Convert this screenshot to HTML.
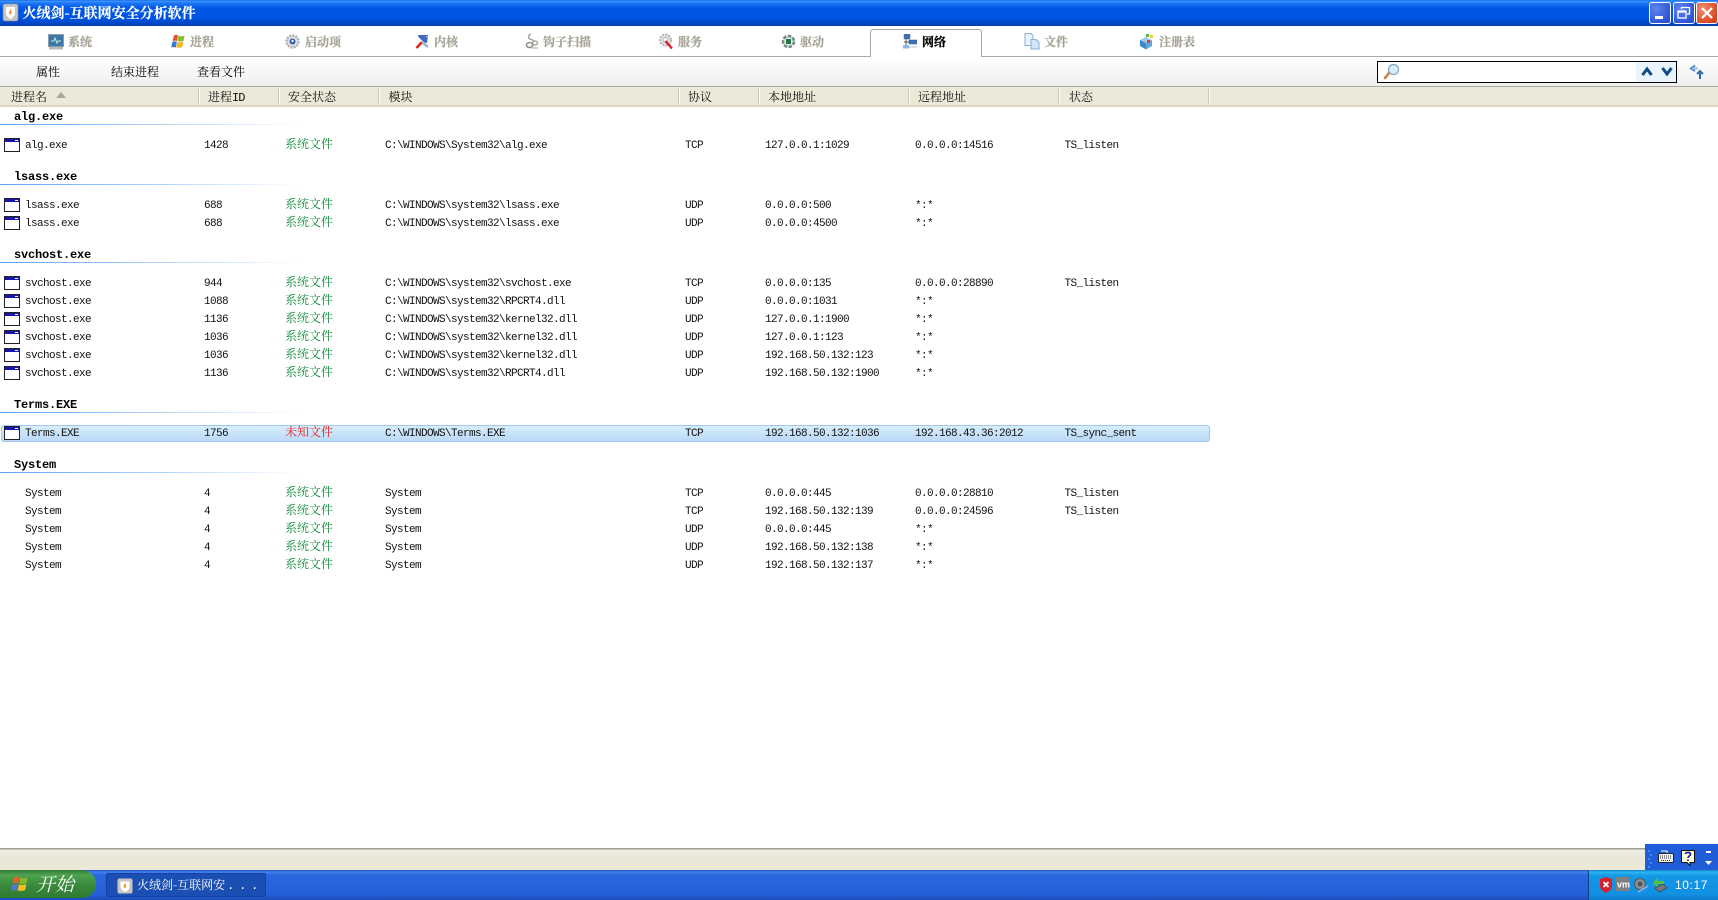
<!DOCTYPE html>
<html><head><meta charset="utf-8"><title>火绒剑-互联网安全分析软件</title>
<style>
html,body{margin:0;padding:0;background:#fff;width:1718px;height:900px;overflow:hidden}
body{position:relative;font-family:"Liberation Mono","Noto Serif CJK SC",monospace;color:#000}
div,span,svg{position:absolute;white-space:nowrap}
s{text-decoration:none}
.title{left:0;top:0;width:1718px;height:26px;background:linear-gradient(#0b5fe0 0,#3f97ff 1px,#1f78f5 3px,#0057e5 8px,#0054e3 18px,#0048c8 23px,#003ca8 26px)}
.tt{left:22.500px;top:3px;line-height:20px;color:#fff;font:bold 14px "Noto Serif CJK SC",serif;-webkit-text-stroke:.2px #fff}
.wb{top:2px;width:20px;height:20px;border:1px solid #fff;border-radius:3px;background:radial-gradient(circle at 30% 30%,#5f84ea,#2a50d6 80%)}
.tab{top:27px;font:bold 12px/30px "Noto Serif CJK SC",serif;color:#a8a598;-webkit-text-stroke:.3px #a8a598}
.tb{top:63px;line-height:18px;font-size:12px;font-family:"Noto Serif CJK SC",serif}
.hd{left:0;top:86px;width:1718px;height:21px;background:#ece9d8;border-top:1px solid #a8a8a8;box-sizing:border-box}
.hd:after{content:"";position:absolute;left:0;right:0;bottom:0;height:2px;background:#d9d6c3}
.h{top:88px;line-height:18px;font-size:12px;font-family:"Noto Serif CJK SC",serif;color:#111}
.sp{top:89px;width:1px;height:14px;background:#c4c1ac;border-right:1px solid #fff}
.g{left:14px;font:bold 12px/18px "Liberation Mono",monospace;letter-spacing:-.2px;color:#000}
.l{left:0;width:300px;height:1px;background:linear-gradient(90deg,#59a2ff,#a9d0fb 50%,#fff)}
.r{left:0;width:1210px;height:18px}
.r div{top:1px;line-height:18px;font-size:11px;letter-spacing:-.6px;color:#111}
.n{left:25px}.p{left:204px}.m{left:385px}.t{left:685px}.a{left:765px}.b{left:915px}.c{left:1064.500px}
.r div.s{top:-1px;left:285px;font-family:"Noto Serif CJK SC",serif;font-size:12px;letter-spacing:0;color:#0a8a36}
.i{left:4px;top:2px;width:16px;height:14px}
</style></head><body>

<div class="title"></div>
<svg style="left:2px;top:3px" width="17" height="19" viewBox="0 0 17 19"><rect x="1" y="1" width="15" height="17" rx="2" fill="#c9c6c2" stroke="#8a8a8a" stroke-width=".6"/><path d="M4 4h9v6c0 3-3 5-4.500 6C7 15 4 13 4 10z" fill="#fff"/><path d="M8.500 6c1 2 1.500 2.500 1 4.500-.5 1-2 1-2.500 0-.2-1 .5-2 1.500-4.500z" fill="#ee9a22"/></svg>
<div class="tt">火绒剑-互联网安全分析软件</div>
<div class="wb" style="left:1649px"><span style="left:5px;top:13px;width:8px;height:3px;background:#fff"></span></div>
<div class="wb" style="left:1673px"><svg style="left:3px;top:3px" width="14" height="14" viewBox="0 0 14 14" fill="none" stroke="#fff" stroke-width="1.300"><rect x="1" y="5" width="8" height="7"/><path d="M1 6h8"/><path d="M4.500 3V1.500H12.500V8H10"/></svg></div>
<div class="wb" style="left:1696px;background:radial-gradient(circle at 30% 30%,#f08f70,#d8431c 80%)"><svg style="left:3px;top:3px" width="14" height="14" viewBox="0 0 14 14"><path d="M2 2L12 12M12 2L2 12" stroke="#fff" stroke-width="2.200"/></svg></div>

<!-- tabs -->
<div style="left:0;top:56px;width:1718px;height:1px;background:#a8a8a8"></div>
<div style="left:869.500px;top:29px;width:110px;height:28px;background:#fff;border:1px solid #a8a8a8;border-bottom:0;border-radius:3px 3px 0 0"></div>

<svg style="left:48px;top:34px" width="16" height="16" viewBox="0 0 16 16"><rect x=".5" y=".5" width="15" height="12" fill="#3d76a8" stroke="#8d9aa8"/><path d="M3 7h3l1-3 2 5 1-2h3" stroke="#bff0e0" fill="none"/><rect x="1" y="13" width="14" height="2.500" fill="#b8b8b8"/></svg>
<div class="tab" style="left:68px">系统</div>
<svg style="left:171px;top:34px" width="14" height="15" viewBox="0 0 14 15"><path d="M3 1.500C5 .5 6 1 7 1.500l-1 5.500C4.500 6.500 3 6.500 1.500 7z" fill="#e8502a"/><path d="M7.500 1.500c2 1 4 1 6 .2L12.500 7c-2 .8-4 .6-6 0z" fill="#86c02e"/><path d="M1.300 7.800c1.500-.5 3-.5 4.500 0L4.800 13.500C3.500 13 2 13 .3 13.500z" fill="#3c79d8"/><path d="M6.300 7.800c2 .6 4 .6 6 0l-1 5.500c-2 .8-4 .6-6 0z" fill="#f3bb1c"/></svg>
<div class="tab" style="left:190px">进程</div>
<svg style="left:285px;top:34px" width="15" height="15" viewBox="0 0 15 15"><circle cx="7.500" cy="7.500" r="6" fill="#dcdcdc" stroke="#b0b0b0" stroke-width="2.400" stroke-dasharray="2 1.100"/><circle cx="7.500" cy="7.500" r="4.800" fill="#e2e4ea"/><circle cx="7.500" cy="7.500" r="3" fill="#2f5aa8"/><circle cx="7.500" cy="7" r="1.200" fill="#fff"/></svg>
<div class="tab" style="left:305px">启动项</div>
<svg style="left:415px;top:34px" width="15" height="15" viewBox="0 0 15 15"><path d="M3 1h10l-1 8-3-.5L3.500 3z" fill="#3f68c0"/><path d="M10 2h3v3z" fill="#8fb0e8"/><path d="M7 8L1.500 14" stroke="#d8281e" stroke-width="2.500"/><path d="M8 9l5 4" stroke="#9ab0dc" stroke-width="2.500"/></svg>
<div class="tab" style="left:434px">内核</div>
<svg style="left:525px;top:33px" width="15" height="17" viewBox="0 0 15 17" fill="none" stroke="#aaa9a0" stroke-width="1.600"><path d="M6 1c-2 1-3 2-2 4s3 1 5 3"/><ellipse cx="10" cy="10" rx="2.500" ry="2"/><ellipse cx="4.500" cy="12" rx="3" ry="2.500" stroke="#8e8e86"/><path d="M7 15h6" stroke="#c8c8c0"/></svg>
<div class="tab" style="left:543px">钩子扫描</div>
<svg style="left:658px;top:33px" width="16" height="17" viewBox="0 0 16 17"><circle cx="7.500" cy="7" r="5.500" fill="#e6e6e6" stroke="#b4b4b4" stroke-width="2.200" stroke-dasharray="2 1.200"/><circle cx="7.500" cy="7" r="2.500" fill="#fff" stroke="#b0b0b0"/><path d="M7.500 8l6.500 7.500" stroke="#d2222c" stroke-width="2.400"/></svg>
<div class="tab" style="left:678px">服务</div>
<svg style="left:781px;top:34px" width="15" height="15" viewBox="0 0 15 15"><circle cx="7.500" cy="7.500" r="5.500" fill="#d9e2d9" stroke="#6f8a80" stroke-width="2.600" stroke-dasharray="3.500 1.500"/><circle cx="7.500" cy="7.500" r="4" fill="#e8f0e8"/><rect x="5" y="5" width="5" height="5" fill="#1e7a45"/></svg>
<div class="tab" style="left:800px">驱动</div>
<svg style="left:903px;top:34px" width="14" height="15" viewBox="0 0 14 15"><rect x="1" y="0" width="6" height="5" fill="#3b6cb0" stroke="#5d7a9e" stroke-width=".5"/><rect x="6" y="6" width="8" height="4" fill="#3f72bc" stroke="#2a4d80" stroke-width=".5"/><rect x="0" y="11" width="6" height="3.500" fill="#8fb4e0"/><path d="M3 5v6M1 8h5" stroke="#555"/><path d="M6 13h8" stroke="#a9c4e6"/></svg>
<div class="tab" style="left:922px;color:#000;-webkit-text-stroke:.3px #000">网络</div>
<svg style="left:1024px;top:33px" width="16" height="17" viewBox="0 0 16 17"><path d="M1 .5h6l2 2v10H1z" fill="#eaf3fc" stroke="#88aed8"/><path d="M7 6.500h5l3 3V16H7z" fill="#d3e6f8" stroke="#88aed8"/></svg>
<div class="tab" style="left:1044px">文件</div>
<svg style="left:1139px;top:33px" width="16" height="17" viewBox="0 0 16 17"><path d="M1 7l6-3 6 3-6 3z" fill="#9ccaee"/><path d="M1 7v6l6 3.500V10z" fill="#3f87c8"/><path d="M13 7v6l-6 3.500V10z" fill="#5ea5d8"/><rect x="8" y="7" width="3" height="3" fill="#e23c3c"/><rect x="11" y="2" width="3" height="3" fill="#e8d02a"/><rect x="7" y="1" width="3" height="3" fill="#4db84d"/></svg>
<div class="tab" style="left:1159px">注册表</div>

<!-- toolbar -->
<div style="left:0;top:57px;width:1718px;height:29px;background:linear-gradient(#fff,#efefef)"></div>
<div class="tb" style="left:36px">属性</div>
<div class="tb" style="left:111px">结束进程</div>
<div class="tb" style="left:197px">查看文件</div>
<div style="left:1377px;top:61px;width:298px;height:20px;border:1px solid #000;background:#fff"></div>
<div style="left:1636px;top:62px;width:40px;height:20px;background:#eaf4fc"></div>
<svg style="left:1383px;top:63px" width="17" height="17" viewBox="0 0 17 17"><path d="M6 10l-4 5" stroke="#c48438" stroke-width="2.600" stroke-linecap="round"/><circle cx="10.500" cy="6.500" r="5" fill="#d6eefb" stroke="#8aa4c0" stroke-width="1.200"/></svg>
<svg style="left:1641px;top:66px" width="12" height="11" viewBox="0 0 12 11"><path d="M1.500 9L6 3l4.500 6" fill="none" stroke="#0f4c86" stroke-width="3"/></svg>
<svg style="left:1661px;top:66px" width="12" height="11" viewBox="0 0 12 11"><path d="M1.500 2L6 8l4.500-6" fill="none" stroke="#0f4c86" stroke-width="3"/></svg>
<svg style="left:1689px;top:64px" width="16" height="16" viewBox="0 0 16 16" fill="none" stroke-width="2"><path d="M6 1.500L2 4.500l4 2.500" stroke="#4a86c8"/><path d="M3 4.500h6" stroke="#9cc0e6"/><path d="M11 15V7" stroke="#2e6cae"/><path d="M8 10l3-3 3 3" stroke="#2e6cae"/></svg>

<!-- header -->
<div class="hd"></div>
<div class="h" style="left:11px">进程名</div>
<svg style="left:56px;top:92px" width="10" height="6" viewBox="0 0 10 6"><path d="M5 0L10 6H0z" fill="#aca899"/></svg>
<div class="sp" style="left:198px"></div><div class="h" style="left:208px">进程<s style="font:12px 'Liberation Mono',monospace;letter-spacing:-1px">ID</s></div>
<div class="sp" style="left:278px"></div><div class="h" style="left:288px">安全状态</div>
<div class="sp" style="left:378px"></div><div class="h" style="left:388.500px">模块</div>
<div class="sp" style="left:678px"></div><div class="h" style="left:688px">协议</div>
<div class="sp" style="left:758px"></div><div class="h" style="left:768px">本地地址</div>
<div class="sp" style="left:908px"></div><div class="h" style="left:918px">远程地址</div>
<div class="sp" style="left:1058px"></div><div class="h" style="left:1069px">状态</div>
<div class="sp" style="left:1208px"></div>

<!-- alg -->
<div class="g" style="top:108px">alg.exe</div><div class="l" style="top:124px"></div>
<div class="r" style="top:136px"><svg class="i" viewBox="0 0 16 14"><rect x=".5" y=".5" width="15" height="13" fill="#fff" stroke="#222"/><rect x="1" y="1" width="14" height="3" fill="#1616b0"/><rect x="11" y="2" width="3" height="1" fill="#fff"/></svg><div class="n">alg.exe</div><div class="p">1428</div><div class="s">系统文件</div><div class="m">C:\WINDOWS\System32\alg.exe</div><div class="t">TCP</div><div class="a">127.0.0.1:1029</div><div class="b">0.0.0.0:14516</div><div class="c">TS_listen</div></div>

<!-- lsass -->
<div class="g" style="top:168px">lsass.exe</div><div class="l" style="top:184px"></div>
<div class="r" style="top:196px"><svg class="i" viewBox="0 0 16 14"><rect x=".5" y=".5" width="15" height="13" fill="#fff" stroke="#222"/><rect x="1" y="1" width="14" height="3" fill="#1616b0"/><rect x="11" y="2" width="3" height="1" fill="#fff"/></svg><div class="n">lsass.exe</div><div class="p">688</div><div class="s">系统文件</div><div class="m">C:\WINDOWS\system32\lsass.exe</div><div class="t">UDP</div><div class="a">0.0.0.0:500</div><div class="b">*:*</div></div>
<div class="r" style="top:214px"><svg class="i" viewBox="0 0 16 14"><rect x=".5" y=".5" width="15" height="13" fill="#fff" stroke="#222"/><rect x="1" y="1" width="14" height="3" fill="#1616b0"/><rect x="11" y="2" width="3" height="1" fill="#fff"/></svg><div class="n">lsass.exe</div><div class="p">688</div><div class="s">系统文件</div><div class="m">C:\WINDOWS\system32\lsass.exe</div><div class="t">UDP</div><div class="a">0.0.0.0:4500</div><div class="b">*:*</div></div>

<!-- svchost -->
<div class="g" style="top:246px">svchost.exe</div><div class="l" style="top:262px"></div>
<div class="r" style="top:274px"><svg class="i" viewBox="0 0 16 14"><rect x=".5" y=".5" width="15" height="13" fill="#fff" stroke="#222"/><rect x="1" y="1" width="14" height="3" fill="#1616b0"/><rect x="11" y="2" width="3" height="1" fill="#fff"/></svg><div class="n">svchost.exe</div><div class="p">944</div><div class="s">系统文件</div><div class="m">C:\WINDOWS\system32\svchost.exe</div><div class="t">TCP</div><div class="a">0.0.0.0:135</div><div class="b">0.0.0.0:28890</div><div class="c">TS_listen</div></div>
<div class="r" style="top:292px"><svg class="i" viewBox="0 0 16 14"><rect x=".5" y=".5" width="15" height="13" fill="#fff" stroke="#222"/><rect x="1" y="1" width="14" height="3" fill="#1616b0"/><rect x="11" y="2" width="3" height="1" fill="#fff"/></svg><div class="n">svchost.exe</div><div class="p">1088</div><div class="s">系统文件</div><div class="m">C:\WINDOWS\system32\RPCRT4.dll</div><div class="t">UDP</div><div class="a">0.0.0.0:1031</div><div class="b">*:*</div></div>
<div class="r" style="top:310px"><svg class="i" viewBox="0 0 16 14"><rect x=".5" y=".5" width="15" height="13" fill="#fff" stroke="#222"/><rect x="1" y="1" width="14" height="3" fill="#1616b0"/><rect x="11" y="2" width="3" height="1" fill="#fff"/></svg><div class="n">svchost.exe</div><div class="p">1136</div><div class="s">系统文件</div><div class="m">C:\WINDOWS\system32\kernel32.dll</div><div class="t">UDP</div><div class="a">127.0.0.1:1900</div><div class="b">*:*</div></div>
<div class="r" style="top:328px"><svg class="i" viewBox="0 0 16 14"><rect x=".5" y=".5" width="15" height="13" fill="#fff" stroke="#222"/><rect x="1" y="1" width="14" height="3" fill="#1616b0"/><rect x="11" y="2" width="3" height="1" fill="#fff"/></svg><div class="n">svchost.exe</div><div class="p">1036</div><div class="s">系统文件</div><div class="m">C:\WINDOWS\system32\kernel32.dll</div><div class="t">UDP</div><div class="a">127.0.0.1:123</div><div class="b">*:*</div></div>
<div class="r" style="top:346px"><svg class="i" viewBox="0 0 16 14"><rect x=".5" y=".5" width="15" height="13" fill="#fff" stroke="#222"/><rect x="1" y="1" width="14" height="3" fill="#1616b0"/><rect x="11" y="2" width="3" height="1" fill="#fff"/></svg><div class="n">svchost.exe</div><div class="p">1036</div><div class="s">系统文件</div><div class="m">C:\WINDOWS\system32\kernel32.dll</div><div class="t">UDP</div><div class="a">192.168.50.132:123</div><div class="b">*:*</div></div>
<div class="r" style="top:364px"><svg class="i" viewBox="0 0 16 14"><rect x=".5" y=".5" width="15" height="13" fill="#fff" stroke="#222"/><rect x="1" y="1" width="14" height="3" fill="#1616b0"/><rect x="11" y="2" width="3" height="1" fill="#fff"/></svg><div class="n">svchost.exe</div><div class="p">1136</div><div class="s">系统文件</div><div class="m">C:\WINDOWS\system32\RPCRT4.dll</div><div class="t">UDP</div><div class="a">192.168.50.132:1900</div><div class="b">*:*</div></div>

<!-- Terms -->
<div class="g" style="top:396px">Terms.EXE</div><div class="l" style="top:412px"></div>
<div style="left:1px;top:425px;width:1207px;height:15px;background:linear-gradient(#d7effd,#bad8f7);border:1px solid #a3c6ec;border-radius:3px"></div>
<div class="r" style="top:424px"><svg class="i" viewBox="0 0 16 14"><rect x=".5" y=".5" width="15" height="13" fill="#fff" stroke="#222"/><rect x="1" y="1" width="14" height="3" fill="#1616b0"/><rect x="11" y="2" width="3" height="1" fill="#fff"/></svg><div class="n">Terms.EXE</div><div class="p">1756</div><div class="s" style="color:#f01818">未知文件</div><div class="m">C:\WINDOWS\Terms.EXE</div><div class="t">TCP</div><div class="a">192.168.50.132:1036</div><div class="b">192.168.43.36:2012</div><div class="c">TS_sync_sent</div></div>

<!-- System -->
<div class="g" style="top:456px">System</div><div class="l" style="top:472px"></div>
<div class="r" style="top:484px"><div class="n">System</div><div class="p">4</div><div class="s">系统文件</div><div class="m">System</div><div class="t">TCP</div><div class="a">0.0.0.0:445</div><div class="b">0.0.0.0:28810</div><div class="c">TS_listen</div></div>
<div class="r" style="top:502px"><div class="n">System</div><div class="p">4</div><div class="s">系统文件</div><div class="m">System</div><div class="t">TCP</div><div class="a">192.168.50.132:139</div><div class="b">0.0.0.0:24596</div><div class="c">TS_listen</div></div>
<div class="r" style="top:520px"><div class="n">System</div><div class="p">4</div><div class="s">系统文件</div><div class="m">System</div><div class="t">UDP</div><div class="a">0.0.0.0:445</div><div class="b">*:*</div></div>
<div class="r" style="top:538px"><div class="n">System</div><div class="p">4</div><div class="s">系统文件</div><div class="m">System</div><div class="t">UDP</div><div class="a">192.168.50.132:138</div><div class="b">*:*</div></div>
<div class="r" style="top:556px"><div class="n">System</div><div class="p">4</div><div class="s">系统文件</div><div class="m">System</div><div class="t">UDP</div><div class="a">192.168.50.132:137</div><div class="b">*:*</div></div>

<!-- status bar -->
<div style="left:0;top:848px;width:1718px;height:22px;background:linear-gradient(#a09e94 0,#a09e94 1px,#f0eee4 2px,#eae7d6 10px,#ece9d8 100%)"></div>

<!-- taskbar -->
<div style="left:0;top:870px;width:1718px;height:30px;background:linear-gradient(#1e4fbf 0,#3f82ee 2px,#2a66dc 5px,#2460d8 24px,#1b4db8 30px)"></div>
<div style="left:0;top:870px;width:96px;height:28px;border-radius:0 14px 14px 0/0 14px 14px 0;background:linear-gradient(#2e7a36 0,#4fa24f 5px,#3a8c3e 14px,#2f7a32 28px)"></div>
<svg style="left:10px;top:875px" width="20" height="18" viewBox="0 0 20 18"><path d="M4 3c2-1.500 4-1.500 5.500-.5L8 8.500C6 8 4 8 2.500 9z" fill="#e8602a"/><path d="M10.500 2.500c2 1 4.500 1 7 0L16.500 8c-2.500 1-5 1-7.500.5z" fill="#86b832"/><path d="M2 10c2-.8 4-.8 5.800-.5L6.500 15.500C4.500 15 3 15 1 16z" fill="#4f78d8"/><path d="M8.800 9.500c2.500.6 5 .5 7.500-.5l-1 6c-2.500 1-5 1-7.800.500z" fill="#f0c020"/></svg>
<div style="left:36px;top:870px;font:italic 19px/28px 'Noto Serif CJK SC',serif;color:#fff">开始</div>
<div style="left:106px;top:873px;width:160px;height:24px;background:#1c4fb4;border:1px solid #1840a0;box-sizing:border-box;border-radius:2px"></div>
<svg style="left:117px;top:878px" width="16" height="16" viewBox="0 0 16 16"><rect x=".5" y=".5" width="15" height="15" rx="2" fill="#c9c6c2"/><path d="M3.500 3.500h9V9c0 2.500-2.500 4-4.500 5-2-1-4.500-2.500-4.500-5z" fill="#fff"/><path d="M8 5c1 2 1.500 2.500 1 4-.5 1-2 1-2.500 0-.2-1 .5-2 1.500-4z" fill="#ee9a22"/></svg>
<div style="left:137px;top:876px;font:12px/18px 'Noto Serif CJK SC',serif;color:#fff">火绒剑-互联网安<s style="font:12px 'Liberation Mono',monospace;letter-spacing:-1.200px;margin-left:2px;word-spacing:0">. . .</s></div>

<!-- language bar -->
<div style="left:1645px;top:844px;width:73px;height:26px;background:#1f5ed8"></div>
<svg style="left:1647px;top:850px" width="6" height="18" viewBox="0 0 6 18" fill="#3f88f0"><rect x="1" y="0" width="2" height="2"/><rect x="3" y="4" width="2" height="2"/><rect x="1" y="8" width="2" height="2"/><rect x="3" y="12" width="2" height="2"/><rect x="1" y="16" width="2" height="2"/></svg>
<svg style="left:1658px;top:850px" width="16" height="13" viewBox="0 0 16 13"><path d="M3 1h6v2.500" stroke="#fff" fill="none"/><rect x=".5" y="3.500" width="15" height="9" rx="1" fill="#f2f2f2" stroke="#222"/><path d="M2 6h12M2 8h12M3 10.500h10" stroke="#333" stroke-dasharray="1 1"/></svg>
<svg style="left:1681px;top:850px" width="14" height="16" viewBox="0 0 14 16"><path d="M.5.500h13v12H9v3l-3-3H.5z" fill="#ffffd8" stroke="#111"/><path d="M4.500 4c0-2 5-2 5 0 0 2-2.500 2-2.500 4M7 9.500V11" stroke="#1b1ba8" stroke-width="1.700" fill="none"/></svg>
<div style="left:1706px;top:851px;width:5px;height:2px;background:#fff"></div>
<svg style="left:1705px;top:861px" width="7" height="4" viewBox="0 0 7 4"><path d="M0 0h7L3.500 4z" fill="#fff"/></svg>

<!-- tray -->
<div style="left:1588px;top:870px;width:130px;height:30px;background:linear-gradient(#0f7fc8 0,#2cb6ef 2px,#1496e6 6px,#1290e2 24px,#0e7ccc 30px);border-left:1px solid #0c3f8c;box-sizing:border-box"></div>
<svg style="left:1599px;top:877px" width="14" height="16" viewBox="0 0 14 16"><path d="M7 0l6 2v7c0 3-3 5.500-6 7-3-1.500-6-4-6-7V2z" fill="#d8202c"/><path d="M4.500 5l5 5M9.500 5l-5 5" stroke="#fff" stroke-width="1.800"/></svg>
<svg style="left:1616px;top:877px" width="14" height="14" viewBox="0 0 14 14"><rect width="14" height="14" fill="#7f7f7f"/><text x="1" y="10.500" font-size="9" fill="#fff" font-family="Liberation Sans" font-weight="bold">vm</text></svg>
<svg style="left:1634px;top:877px" width="16" height="16" viewBox="0 0 16 16"><circle cx="6" cy="7" r="5.500" fill="#8b9298" stroke="#555"/><circle cx="6" cy="7" r="2.500" fill="#555"/><path d="M4 15l10-6" stroke="#8fb8ea" stroke-width="1.500"/></svg>
<svg style="left:1652px;top:877px" width="16" height="16" viewBox="0 0 16 16"><path d="M3 11l8-4 4 4-8 4z" fill="#777" stroke="#333" stroke-width=".6"/><path d="M1 6l4-5 1 3h6v3H6l-1 3z" fill="#55c040"/></svg>
<div style="left:1675px;top:877px;font:12px/16px 'Liberation Sans',sans-serif;color:#fff;letter-spacing:.6px">10:17</div>

</body></html>
